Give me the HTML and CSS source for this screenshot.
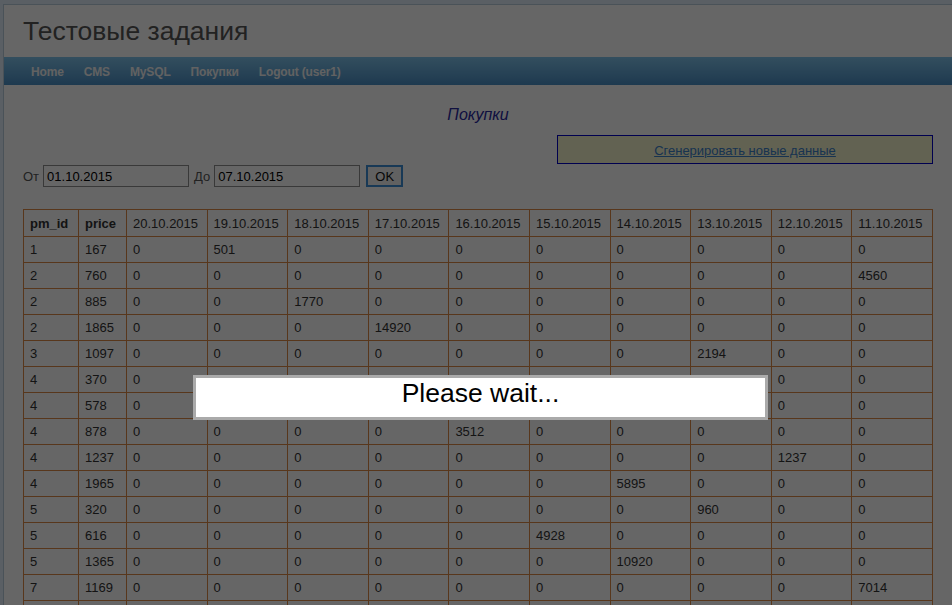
FILE: index.html
```html
<!DOCTYPE html>
<html lang="ru">
<head>
<meta charset="utf-8">
<title>Тестовые задания</title>
<link rel="stylesheet" href="styles.css">
</head>
<body>
<div class="page">
  <header class="header">
    <h1 class="site-title">Тестовые задания</h1>
  </header>
  <nav class="nav">
    <a href="#">Home</a>
    <a href="#">CMS</a>
    <a href="#">MySQL</a>
    <a href="#">Покупки</a>
    <a href="#">Logout (user1)</a>
  </nav>
  <main class="content">
    <h2 class="page-title">Покупки</h2>
    <div class="gen-row">
      <div class="gen-box"><a href="#">Сгенерировать новые данные</a></div>
    </div>
    <form class="filter">
      <label class="lbl">От</label>
      <input class="date" type="text" value="01.10.2015">
      <label class="lbl lbl-to">До</label>
      <input class="date" type="text" value="07.10.2015">
      <button class="ok" type="button">OK</button>
    </form>
    <table class="grid">
      <colgroup>
        <col class="c-id"><col class="c-price">
        <col><col><col><col><col><col><col><col><col><col>
      </colgroup>
      <thead>
        <tr>
          <th class="b">pm_id</th><th class="b">price</th>
          <th>20.10.2015</th><th>19.10.2015</th><th>18.10.2015</th><th>17.10.2015</th><th>16.10.2015</th>
          <th>15.10.2015</th><th>14.10.2015</th><th>13.10.2015</th><th>12.10.2015</th><th>11.10.2015</th>
        </tr>
      </thead>
      <tbody>
        <tr><td>1</td><td>167</td><td>0</td><td>501</td><td>0</td><td>0</td><td>0</td><td>0</td><td>0</td><td>0</td><td>0</td><td>0</td></tr>
        <tr><td>2</td><td>760</td><td>0</td><td>0</td><td>0</td><td>0</td><td>0</td><td>0</td><td>0</td><td>0</td><td>0</td><td>4560</td></tr>
        <tr><td>2</td><td>885</td><td>0</td><td>0</td><td>1770</td><td>0</td><td>0</td><td>0</td><td>0</td><td>0</td><td>0</td><td>0</td></tr>
        <tr><td>2</td><td>1865</td><td>0</td><td>0</td><td>0</td><td>14920</td><td>0</td><td>0</td><td>0</td><td>0</td><td>0</td><td>0</td></tr>
        <tr><td>3</td><td>1097</td><td>0</td><td>0</td><td>0</td><td>0</td><td>0</td><td>0</td><td>0</td><td>2194</td><td>0</td><td>0</td></tr>
        <tr><td>4</td><td>370</td><td>0</td><td>0</td><td>2220</td><td>0</td><td>0</td><td>0</td><td>0</td><td>0</td><td>0</td><td>0</td></tr>
        <tr><td>4</td><td>578</td><td>0</td><td>0</td><td>0</td><td>0</td><td>0</td><td>0</td><td>0</td><td>0</td><td>0</td><td>0</td></tr>
        <tr><td>4</td><td>878</td><td>0</td><td>0</td><td>0</td><td>0</td><td>3512</td><td>0</td><td>0</td><td>0</td><td>0</td><td>0</td></tr>
        <tr><td>4</td><td>1237</td><td>0</td><td>0</td><td>0</td><td>0</td><td>0</td><td>0</td><td>0</td><td>0</td><td>1237</td><td>0</td></tr>
        <tr><td>4</td><td>1965</td><td>0</td><td>0</td><td>0</td><td>0</td><td>0</td><td>0</td><td>5895</td><td>0</td><td>0</td><td>0</td></tr>
        <tr><td>5</td><td>320</td><td>0</td><td>0</td><td>0</td><td>0</td><td>0</td><td>0</td><td>0</td><td>960</td><td>0</td><td>0</td></tr>
        <tr><td>5</td><td>616</td><td>0</td><td>0</td><td>0</td><td>0</td><td>0</td><td>4928</td><td>0</td><td>0</td><td>0</td><td>0</td></tr>
        <tr><td>5</td><td>1365</td><td>0</td><td>0</td><td>0</td><td>0</td><td>0</td><td>0</td><td>10920</td><td>0</td><td>0</td><td>0</td></tr>
        <tr><td>7</td><td>1169</td><td>0</td><td>0</td><td>0</td><td>0</td><td>0</td><td>0</td><td>0</td><td>0</td><td>0</td><td>7014</td></tr>
        <tr><td>7</td><td>1522</td><td>0</td><td>0</td><td>0</td><td>0</td><td>0</td><td>0</td><td>0</td><td>0</td><td>0</td><td>0</td></tr>
        <tr><td>8</td><td>412</td><td>0</td><td>0</td><td>0</td><td>0</td><td>0</td><td>0</td><td>0</td><td>0</td><td>0</td><td>0</td></tr>
      </tbody>
    </table>
  </main>
</div>
<div class="block-overlay"></div>
<div class="block-msg"><h1 class="wait">Please wait...</h1></div>
</body>
</html>
```

FILE: styles.css
```css
html, body {
  margin: 0;
  padding: 0;
}
body {
  background: #e1eefa;
  padding-top: 4px;
  font-family: "Liberation Sans", Arial, sans-serif;
  overflow: hidden;
}
.page {
  margin-left: 3px;
  border-left: 1px solid #b9cddd;
  border-top: 1px solid #b9cddd;
  background: #ffffff;
  min-height: 700px;
}
.header {
  height: 52px;
  padding-left: 19px;
}
.site-title {
  margin: 0;
  font-size: 26.5px;
  font-weight: normal;
  line-height: 52px;
  color: #555555;
}
.nav {
  height: 28px;
  display: flex;
  gap: 20px;
  padding-left: 27px;
  background: linear-gradient(#80c4ec, #4c90c6);
}
.nav a {
  font-size: 12px;
  font-weight: bold;
  letter-spacing: -0.15px;
  line-height: 30px;
  color: #f4f4f4;
  text-decoration: none;
}
.content {
  padding: 0 19px;
}
.page-title {
  margin: 20px 0 0;
  text-align: center;
  font-size: 16px;
  font-style: italic;
  font-weight: normal;
  line-height: 20px;
  color: #2828a0;
}
.gen-row {
  display: flex;
  justify-content: flex-end;
  margin-top: 10px;
}
.gen-box {
  width: 374px;
  height: 25px;
  padding-top: 2px;
  border: 1px solid #0000c8;
  background: #f5f5cd;
  text-align: center;
  font-size: 13px;
  line-height: 25px;
}
.gen-box a {
  color: #3c80c8;
  text-decoration: underline;
}
.filter {
  display: flex;
  align-items: center;
  height: 22px;
  margin: 1px 0 0;
}
.lbl {
  font-size: 13px;
  color: #555555;
  margin-right: 4px;
}
.lbl-to {
  margin-left: 5px;
}
.date {
  box-sizing: border-box;
  width: 146px;
  height: 22px;
  margin: 0;
  padding: 0 3px;
  border: 1px solid #8e8e8e;
  font-family: "Liberation Sans", Arial, sans-serif;
  font-size: 13px;
  color: #000000;
  background: #ffffff;
}
.ok {
  box-sizing: border-box;
  width: 37px;
  height: 22px;
  margin: 0 0 0 6px;
  padding: 0;
  border: 2px solid #3d8fd6;
  background: #f2f2f2;
  font-family: "Liberation Sans", Arial, sans-serif;
  font-size: 13px;
  color: #111111;
}
.grid {
  margin-top: 22px;
  width: 910px;
  table-layout: fixed;
  border-collapse: collapse;
  font-size: 13px;
  color: #333333;
}
.c-id { width: 55px; }
.c-price { width: 48px; }
.grid th,
.grid td {
  border: 1px solid #dc8a48;
  padding: 0 6px;
  text-align: left;
  white-space: nowrap;
  overflow: hidden;
}
.grid th {
  height: 26px;
  font-weight: normal;
}
.grid th.b {
  font-weight: bold;
}
.grid td {
  height: 25px;
}
.block-overlay {
  position: fixed;
  inset: 0;
  background: rgba(0, 0, 0, 0.6);
  z-index: 10;
}
.block-msg {
  position: fixed;
  left: 193px;
  top: 375px;
  width: 569px;
  height: 39px;
  border: 3px solid #aaaaaa;
  background: #ffffff;
  z-index: 11;
  text-align: center;
}
.wait {
  margin: 0;
  font-size: 26.5px;
  font-weight: normal;
  line-height: 30px;
  color: #000000;
}
```
